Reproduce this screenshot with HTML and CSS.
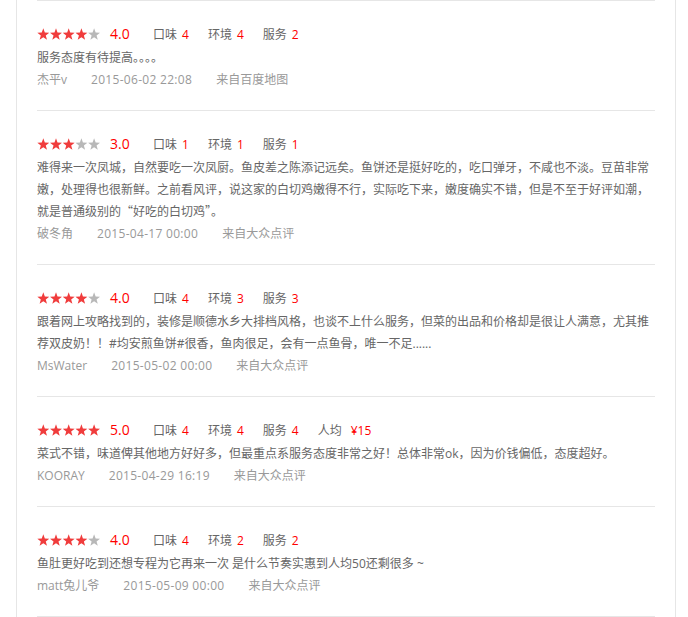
FILE: index.html
```html
<!DOCTYPE html>
<html lang="zh-CN">
<head>
<meta charset="utf-8">
<title>评价</title>
<link rel="stylesheet" href="styles.css">
</head>
<body>
<svg class="defs" width="0" height="0" aria-hidden="true">
  <defs>
    <symbol id="star" viewBox="0 0 12.6 12" width="12.6" height="12">
      <polygon points="6.3,0.3 7.83,4.5 12.29,4.65 8.77,7.4 10,11.7 6.3,9.2 2.6,11.7 3.83,7.4 0.31,4.65 4.77,4.5"/>
    </symbol>
  </defs>
</svg>
<div class="panel">
  <ul class="reviews">
    <li class="review">
      <div class="rating">
        <svg class="stars" width="63" height="12" viewBox="0 0 63 12">
          <use href="#star" x="0" class="on"/><use href="#star" x="12.7" class="on"/><use href="#star" x="25.4" class="on"/><use href="#star" x="38.1" class="on"/><use href="#star" x="50.8" class="off"/>
        </svg>
        <span class="score">4.0</span>
        <span class="sub">口味<span class="val">4</span></span>
        <span class="sub">环境<span class="val">4</span></span>
        <span class="sub">服务<span class="val">2</span></span>
      </div>
      <p class="content">服务态度有待提高。。。。</p>
      <div class="meta"><span class="name">杰平v</span><span class="date">2015-06-02 22:08</span><span class="src">来自百度地图</span></div>
    </li>
    <li class="review">
      <div class="rating">
        <svg class="stars" width="63" height="12" viewBox="0 0 63 12">
          <use href="#star" x="0" class="on"/><use href="#star" x="12.7" class="on"/><use href="#star" x="25.4" class="on"/><use href="#star" x="38.1" class="off"/><use href="#star" x="50.8" class="off"/>
        </svg>
        <span class="score">3.0</span>
        <span class="sub">口味<span class="val">1</span></span>
        <span class="sub">环境<span class="val">1</span></span>
        <span class="sub">服务<span class="val">1</span></span>
      </div>
      <p class="content">难得来一次凤城，自然要吃一次凤厨。鱼皮差之陈添记远矣。鱼饼还是挺好吃的，吃口弹牙，不咸也不淡。豆苗非常嫩，处理得也很新鲜。之前看风评，说这家的白切鸡嫩得不行，实际吃下来，嫩度确实不错，但是不至于好评如潮，就是普通级别的<span class="q">“好吃的白切鸡”</span>。</p>
      <div class="meta"><span class="name">破冬角</span><span class="date">2015-04-17 00:00</span><span class="src">来自大众点评</span></div>
    </li>
    <li class="review">
      <div class="rating">
        <svg class="stars" width="63" height="12" viewBox="0 0 63 12">
          <use href="#star" x="0" class="on"/><use href="#star" x="12.7" class="on"/><use href="#star" x="25.4" class="on"/><use href="#star" x="38.1" class="on"/><use href="#star" x="50.8" class="off"/>
        </svg>
        <span class="score">4.0</span>
        <span class="sub">口味<span class="val">4</span></span>
        <span class="sub">环境<span class="val">3</span></span>
        <span class="sub">服务<span class="val">3</span></span>
      </div>
      <p class="content">跟着网上攻略找到的，装修是顺德水乡大排档风格，也谈不上什么服务，但菜的出品和价格却是很让人满意，尤其推荐双皮奶！！#均安煎鱼饼#很香，鱼肉很足，会有一点鱼骨，唯一不足......</p>
      <div class="meta"><span class="name">MsWater</span><span class="date">2015-05-02 00:00</span><span class="src">来自大众点评</span></div>
    </li>
    <li class="review">
      <div class="rating">
        <svg class="stars" width="63" height="12" viewBox="0 0 63 12">
          <use href="#star" x="0" class="on"/><use href="#star" x="12.7" class="on"/><use href="#star" x="25.4" class="on"/><use href="#star" x="38.1" class="on"/><use href="#star" x="50.8" class="on"/>
        </svg>
        <span class="score">5.0</span>
        <span class="sub">口味<span class="val">4</span></span>
        <span class="sub">环境<span class="val">4</span></span>
        <span class="sub">服务<span class="val">4</span></span>
        <span class="sub">人均<span class="val price">¥15</span></span>
      </div>
      <p class="content">菜式不错，味道俾其他地方好好多，但最重点系服务态度非常之好！总体非常ok，因为价钱偏低，态度超好。</p>
      <div class="meta"><span class="name">KOORAY</span><span class="date">2015-04-29 16:19</span><span class="src">来自大众点评</span></div>
    </li>
    <li class="review">
      <div class="rating">
        <svg class="stars" width="63" height="12" viewBox="0 0 63 12">
          <use href="#star" x="0" class="on"/><use href="#star" x="12.7" class="on"/><use href="#star" x="25.4" class="on"/><use href="#star" x="38.1" class="on"/><use href="#star" x="50.8" class="off"/>
        </svg>
        <span class="score">4.0</span>
        <span class="sub">口味<span class="val">4</span></span>
        <span class="sub">环境<span class="val">2</span></span>
        <span class="sub">服务<span class="val">2</span></span>
      </div>
      <p class="content">鱼肚更好吃到还想专程为它再来一次 是什么节奏实惠到人均50还剩很多 ~</p>
      <div class="meta"><span class="name">matt兔儿爷</span><span class="date">2015-05-09 00:00</span><span class="src">来自大众点评</span></div>
    </li>
  </ul>
</div>
</body>
</html>
```

FILE: styles.css
```css
html, body {
  margin: 0;
  padding: 0;
  background: #fff;
}

body {
  font-family: "Open Sans", "Noto Sans CJK SC", sans-serif;
  font-size: 12px;
  color: #666;
}

.defs {
  display: block;
  width: 0;
  height: 0;
  overflow: hidden;
}

.panel {
  margin-left: 16px;
  width: 618px;
  padding: 0 20px;
  border-left: 1px solid #e6e6e6;
  border-right: 1px solid #e6e6e6;
  min-height: 617px;
}

.reviews {
  list-style: none;
  margin: 0;
  padding: 0;
  border-top: 1px solid #e6e6e6;
}

.review {
  padding: 22px 0 19px;
  border-bottom: 1px solid #e6e6e6;
}

.rating {
  display: flex;
  align-items: center;
  height: 24px;
  line-height: 24px;
}

.stars {
  flex: none;
  margin-right: 10px;
  margin-bottom: 2px;
}

.stars .on {
  fill: #f03c3c;
}

.stars .off {
  fill: #b8b8b8;
}

.score {
  width: 43px;
  font-size: 14px;
  color: #f00;
  margin-bottom: 2px;
}

.sub {
  margin-right: 19px;
  color: #666;
}

.sub .val {
  margin-left: 5px;
  color: #f00;
}

.sub .price {
  margin-left: 9px;
}

.content {
  margin: 0;
  line-height: 22px;
  color: #666;
}

.q {
  font-family: "Noto Sans CJK SC", sans-serif;
  font-variant-east-asian: full-width;
  line-height: 1;
}

.meta {
  display: flex;
  line-height: 22px;
  color: #999;
}

.meta span {
  margin-right: 24px;
}

.meta .date {
  letter-spacing: 0.3px;
}
```
